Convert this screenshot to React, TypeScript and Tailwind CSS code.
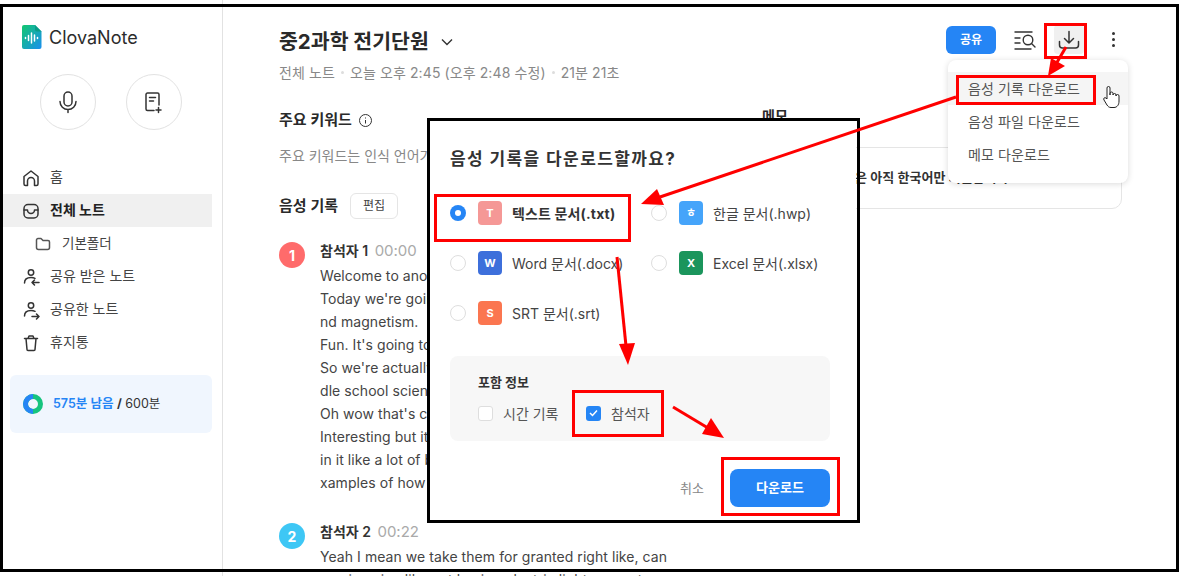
import React from "react";

const FONT = "font-['Inter','Noto_Sans_CJK_KR',sans-serif]";

function Logo() {
  return (
    <svg width="20" height="24" viewBox="0 0 20 24" className="shrink-0">
      <defs>
        <linearGradient id="lg" x1="0" y1="0" x2="1" y2="1">
          <stop offset="0" stopColor="#12c76f" />
          <stop offset="1" stopColor="#1a8ff0" />
        </linearGradient>
      </defs>
      <path d="M2 0h11l6.500 6.500V22a2 2 0 0 1-2 2H2a2 2 0 0 1-2-2V2a2 2 0 0 1 2-2z" fill="url(#lg)" />
      <path d="M13 0l6.500 6.500H15a2 2 0 0 1-2-2z" fill="#0b9d86" />
      <path d="M3.500 12.500v1M6.500 10.500v5M9.500 8v10M12.500 10v6M15.500 12.500v1" stroke="#fff" strokeWidth="1.500" strokeLinecap="round" />
    </svg>
  );
}

function I({ children, w = 20, h = 20 }: { children: React.ReactNode; w?: number; h?: number }) {
  return (
    <svg width={w} height={h} viewBox={`0 0 ${w} ${h}`} fill="none" stroke="#333" strokeWidth="1.5" strokeLinecap="round" strokeLinejoin="round" className="shrink-0">
      {children}
    </svg>
  );
}

function NavItem({ icon, label, active, indent }: { icon: React.ReactNode; label: string; active?: boolean; indent?: boolean }) {
  return (
    <div className={`h-[33px] flex items-center ${indent ? "pl-[32px] gap-[11px] text-[13.500px]" : "pl-[18px] gap-[9px] text-[14px]"} ${active ? "bg-[#f0f0f0] font-bold text-[#222]" : "text-[#444]"}`}>
      {icon}
      <span className={indent ? "" : "pb-[2px]"}>{label}</span>
    </div>
  );
}

function Sidebar() {
  return (
    <aside className="w-[223px] shrink-0 h-[576px] border-r border-[#e2e2e2] flex flex-col pr-[10px] pl-[3px]">
      <div className="flex items-center gap-[7px] pt-[25px] pl-[19px] h-[49px]">
        <Logo />
        <span className="mt-[1px] text-[18px] text-[#2c2c2c] leading-none">ClovaNote</span>
      </div>
      <div className="flex gap-[30px] pl-[37px] mt-[25px]">
        <div className="w-[56px] h-[56px] rounded-full border border-[#e2e2e2] flex items-center justify-center">
          <I w={22} h={24}>
            <rect x="7" y="2" width="8" height="14" rx="4" />
            <path d="M3 11.500a8 8 0 0 0 16 0M11 19.500v3" />
          </I>
        </div>
        <div className="w-[56px] h-[56px] rounded-full border border-[#e2e2e2] flex items-center justify-center">
          <I w={22} h={24}>
            <path d="M11 20.500H4.500a1.500 1.500 0 0 1-1.500-1.500V4.500A1.500 1.500 0 0 1 4.500 3h10A1.500 1.500 0 0 1 16 4.500V15" />
            <path d="M6.500 7.500h6M6.500 11h4M15.500 17.500v5M13 20h5" />
          </I>
        </div>
      </div>
      <nav className="mt-[31px]">
        <NavItem label="홈" icon={<I w={20} h={20}><path d="M3 8.500L10 3l7 5.500V16a1.500 1.500 0 0 1-1.500 1.500h-2V13a3.500 3.500 0 0 0-7 0v4.500h-2A1.500 1.500 0 0 1 3 16z" /></I>} />
        <NavItem active label="전체 노트" icon={<I w={20} h={20}><rect x="3" y="3.500" width="14" height="13.500" rx="4" /><path d="M3 9h3.500a3.500 3.500 0 0 0 7 0H17" /></I>} />
        <NavItem indent label="기본폴더" icon={<I w={16} h={16}><path d="M1.500 4a1.500 1.500 0 0 1 1.500-1.500h3l2 2h5a1.500 1.500 0 0 1 1.500 1.500v5.500a2 2 0 0 1-2 2h-9a2 2 0 0 1-2-2z" stroke="#555" /></I>} />
        <NavItem label="공유 받은 노트" icon={<I w={20} h={20}><circle cx="10" cy="5.500" r="2.700" /><path d="M3.500 16c0-3.500 2-5.500 6.500-5.500 1.500 0 3 .3 4 .8M18 15.500h-7M13.500 13l-2.500 2.500 2.500 2.500" /></I>} />
        <NavItem label="공유한 노트" icon={<I w={20} h={20}><circle cx="10" cy="5.500" r="2.700" /><path d="M3.500 16c0-3.500 2-5.500 6.500-5.500 1.500 0 3 .3 4 .8M11 16.500h7M15.500 14l2.500 2.500-2.500 2.500" /></I>} />
        <NavItem label="휴지통" icon={<I w={20} h={20}><path d="M3.500 5.500h13M7 5.500L8 3h4l1 2.500M5 5.500l1 11a1 1 0 0 0 1 1h6a1 1 0 0 0 1-1l1-11" /></I>} />
      </nav>
      <div className="mt-[16px] ml-[7px] h-[58px] rounded-[6px] bg-[#f0f6fe] flex items-center pl-[13px] gap-[10px] text-[12.500px]">
        <svg width="20" height="20" viewBox="0 0 20 20" fill="none" className="shrink-0">
          <circle cx="10" cy="10" r="7.500" stroke="#15c47e" strokeWidth="5" />
          <path d="M10 2.500A7.500 7.500 0 0 0 10 17.500" stroke="#2585f5" strokeWidth="5" />
        </svg>
        <span>
          <span className="text-[#2585f5] font-semibold">575분 남음</span>
          <span className="text-[#333]"> <b>/</b> 600분</span>
        </span>
      </div>
    </aside>
  );
}

function Speaker({ n, color, time, lines, className }: { n: number; color: string; time: string; lines: string[]; className?: string }) {
  return (
    <div className={`flex ${className ?? ""}`}>
      <div className={`w-[26px] h-[26px] rounded-full ${color} text-white text-[14px] font-bold flex items-center justify-center shrink-0 mt-[1px]`}>{n}</div>
      <div className="ml-[15px]">
        <div className="text-[14px] h-[20px] leading-[20px] font-semibold text-[#333] whitespace-nowrap">
          참석자 {n} <span className="ml-[3px] text-[15px] font-normal text-[#aaa]">{time}</span>
        </div>
        <div className="mt-[3px] text-[14px] leading-[23px] tracking-[0.06px] text-[#444] whitespace-nowrap">
          {lines.map((l) => (
            <div key={l}>{l}</div>
          ))}
        </div>
      </div>
    </div>
  );
}

function Main() {
  return (
    <main className="flex-1 pl-[56px] pr-[59px] relative">
      <div className="flex items-start justify-between pt-[25px]">
        <div className="mt-[2px]">
          <div className="flex items-center h-[30px] gap-[11px]">
            <h1 className="text-[20.500px] font-bold text-[#2a2a2a] leading-none">중2과학 전기단원</h1>
            <svg width="14" height="14" viewBox="0 0 14 14" fill="none" stroke="#333" strokeWidth="1.400"><path d="M2 4.500l5 5 5-5" /></svg>
          </div>
          <div className="mt-[5px] text-[14px] tracking-[0.1px] text-[#888] flex items-center gap-[6px] h-[20px]">
            전체 노트 <i className="w-[3px] h-[3px] rounded-full bg-[#ddd]" /> 오늘 오후 2:45 (오후 2:48 수정) <i className="w-[3px] h-[3px] rounded-full bg-[#ddd]" /> 21분 21초
          </div>
        </div>
        <div className="flex items-center -mr-[6px]">
          <button className="w-[50px] h-[28px] rounded-[6px] bg-[#2585f5] text-white text-[12px] font-bold">공유</button>
          <div className="w-[30px] h-[29px] ml-[14px] flex items-center justify-center">
            <svg width="24" height="22" viewBox="0 0 24 22" fill="none" stroke="#333" strokeWidth="1.400" strokeLinecap="round">
              <path d="M2 3h17M2 9h5M2 14h5M2 20h16" />
              <circle cx="15" cy="11" r="4.800" />
              <path d="M18.500 14.500L22 18" />
            </svg>
          </div>
          <div className="w-[30px] h-[29px] ml-[14px] rounded-[4px] bg-[#f0f0f0] flex items-center justify-center">
            <svg width="22" height="20" viewBox="0 0 22 20" fill="none" stroke="#333" strokeWidth="1.500" strokeLinecap="round" strokeLinejoin="round">
              <path d="M11 1.500v11M6.500 8.500l4.500 4.500 4.500-4.500M1.500 11.500v3.500a3 3 0 0 0 3 3h13a3 3 0 0 0 3-3v-3.500" />
            </svg>
          </div>
          <div className="w-[30px] h-[29px] ml-[14px] flex flex-col items-center justify-center gap-[3px]">
            <i className="w-[3px] h-[3px] rounded-full bg-[#333]" />
            <i className="w-[3px] h-[3px] rounded-full bg-[#333]" />
            <i className="w-[3px] h-[3px] rounded-full bg-[#333]" />
          </div>
        </div>
      </div>

      <div className="flex mt-[28px]">
        <div className="w-[483px] shrink-0">
          <div className="flex items-center gap-[6px] h-[20px] text-[15px] font-semibold text-[#2a2a2a]">
            주요 키워드
            <svg width="15" height="15" viewBox="0 0 15 15" fill="none" stroke="#333" strokeWidth="1"><circle cx="7.500" cy="7.500" r="6" /><path d="M7.500 7v3.500M7.500 4.500v1" /></svg>
          </div>
          <div className="mt-[16px] h-[20px] leading-[20px] text-[14px] text-[#888] whitespace-nowrap">주요 키워드는 인식 언어가 한국어인 경우에만 제공됩니다.</div>
          <div className="flex items-center mt-[27px] h-[26px]">
            <span className="text-[15px] font-semibold text-[#2a2a2a]">음성 기록</span>
            <span className="ml-[12px] w-[48px] h-[26px] rounded-[6px] border border-[#e5e5e5] text-[12px] text-[#444] flex items-center justify-center">편집</span>
          </div>
          <Speaker
            className="mt-[22px]"
            n={1}
            color="bg-[#ff6b6b]"
            time="00:00"
            lines={[
              "Welcome to another deep dive everybody.",
              "Today we're going to be talking about electricity a",
              "nd magnetism.",
              "Fun. It's going to be a great one.",
              "So we're actually looking at a mid",
              "dle school science textbook.",
              "Oh wow that's cool.",
              "Interesting but it's got some good stuff",
              "in it like a lot of basic concepts and good e",
              "xamples of how these things work.",
            ]}
          />
          <Speaker
            className="mt-[28px]"
            n={2}
            color="bg-[#3ec7f5]"
            time="00:22"
            lines={["Yeah I mean we take them for granted right like, can", "you imagine like not having electric light or a note"]}
          />
        </div>
        <div className="flex-1 -mt-[5px]">
          <div className="h-[20px] text-[14px] font-semibold text-[#2a2a2a]">메모</div>
          <div className="mt-[22px] h-[62px] rounded-[10px] border border-[#e5e5e5] flex items-center pl-[41px] text-[13px] font-semibold text-[#333] whitespace-nowrap">
            메모 기능은 아직 한국어만 지원합니다.
          </div>
        </div>
      </div>

      <div className="absolute left-[725px] top-[60px] w-[180px] h-[123px] rounded-[8px] bg-white shadow-[0_1px_6px_rgba(0,0,0,0.15)] pt-[12px] text-[14px] text-[#555]">
        {["음성 기록 다운로드", "음성 파일 다운로드", "메모 다운로드"].map((t, i) => (
          <div key={t} className={`h-[33px] flex items-center pl-[20px] tracking-[0.1px] ${i === 0 ? "bg-[#f5f5f5]" : ""}`}>{t}</div>
        ))}
      </div>
    </main>
  );
}

function FileIcon({ bg, c }: { bg: string; c: string }) {
  return <span className={`w-[24px] h-[24px] rounded-[4px] ${bg} text-white text-[11px] font-bold flex items-center justify-center shrink-0`}>{c}</span>;
}

function Option({ bg, c, label, checked }: { bg: string; c: string; label: string; checked?: boolean }) {
  return (
    <div className={`h-[24px] flex items-center text-[14px] whitespace-nowrap ${checked ? "font-bold tracking-[0.15px] text-[#333]" : "text-[#444]"}`}>
      {checked ? (
        <span className="w-[16px] h-[16px] rounded-full bg-[#2585f5] flex items-center justify-center shrink-0"><i className="w-[6px] h-[6px] rounded-full bg-white" /></span>
      ) : (
        <span className="w-[16px] h-[16px] rounded-full border border-[#dedede] shrink-0" />
      )}
      <span className="ml-[12px]"><FileIcon bg={bg} c={c} /></span>
      <span className="ml-[10px]">{label}</span>
    </div>
  );
}

function Modal() {
  return (
    <div className="absolute left-[430px] top-[121px] w-[426px] h-[398px] rounded-[10px] bg-white px-[20px] pt-[27px]">
      <h2 className="text-[17px] font-bold text-[#333] leading-[22px] tracking-[1.400px]">음성 기록을 다운로드할까요?</h2>
      <div className="grid grid-cols-[201px_1fr] gap-y-[26px] mt-[31px]">
        <Option checked bg="bg-[#f59896]" c="T" label="텍스트 문서(.txt)" />
        <Option bg="bg-[#45a4fa]" c="ㅎ" label="한글 문서(.hwp)" />
        <Option bg="bg-[#3d6fdb]" c="W" label="Word 문서(.docx)" />
        <Option bg="bg-[#1b955c]" c="X" label="Excel 문서(.xlsx)" />
        <Option bg="bg-[#fb7650]" c="S" label="SRT 문서(.srt)" />
      </div>
      <div className="mt-[31px] h-[85px] w-[380px] rounded-[8px] bg-[#f7f7f7] pl-[28px] pt-[17px]">
        <div className="text-[13px] font-bold text-[#333] leading-[18px]">포함 정보</div>
        <div className="flex items-center mt-[10px] h-[24px] text-[14px] text-[#555]">
          <span className="w-[15px] h-[15px] rounded-[3px] border border-[#dedede] bg-white" />
          <span className="ml-[10px] w-[83px]">시간 기록</span>
          <span className="w-[15px] h-[15px] rounded-[3px] bg-[#2585f5] flex items-center justify-center">
            <svg width="9" height="8" viewBox="0 0 9 8" fill="none" stroke="#fff" strokeWidth="1.500"><path d="M1 4l2.500 2.500L8 1.500" /></svg>
          </span>
          <span className="ml-[10px]">참석자</span>
        </div>
      </div>
      <div className="flex items-center justify-end mt-[28px] w-[380px]">
        <span className="mt-[1px] text-[13px] text-[#888]">취소</span>
        <button className="ml-[26px] w-[100px] h-[38px] rounded-[8px] bg-[#2585f5] text-white text-[13px] font-bold">다운로드</button>
      </div>
    </div>
  );
}

function Box({ c }: { c: string }) {
  return <div className={`absolute border-[3px] border-[#ff0000] ${c}`} />;
}

function Overlay() {
  return (
    <>
      <div className="absolute left-[427px] top-[118px] w-[433px] h-[405px] border-[3px] border-black pointer-events-none" />
      <div className="absolute left-0 top-[4px] w-[1179px] h-[568px] border-[3px] border-black pointer-events-none" />
      <Box c="left-[956px] top-[75px] w-[140px] h-[30px]" />
      <Box c="left-[1044px] top-[23px] w-[43px] h-[36px]" />
      <Box c="left-[434px] top-[194px] w-[197px] h-[48px]" />
      <Box c="left-[572px] top-[390px] w-[92px] h-[47px]" />
      <Box c="left-[721px] top-[457px] w-[119px] h-[59px]" />
      <svg className="absolute left-0 top-0 pointer-events-none" width="1181" height="576" fill="#ff0000" stroke="none">
        <line x1="1066" y1="47" x2="1056" y2="64" stroke="#ff0000" strokeWidth="3" />
        <polygon points="1048,76 1051,58 1065,66" />
        <line x1="956" y1="97" x2="660" y2="197" stroke="#ff0000" strokeWidth="3" />
        <polygon points="641,204 657,189 664,205" />
        <line x1="617" y1="257" x2="626" y2="346" stroke="#ff0000" strokeWidth="3" />
        <polygon points="628,365 619,344 635,343" />
        <line x1="673" y1="407" x2="708" y2="428" stroke="#ff0000" strokeWidth="3" />
        <polygon points="724,438 702,434 711,418" />
      </svg>
      <svg className="absolute left-[1102px] top-[85px] pointer-events-none" width="20" height="24" viewBox="0 0 20 24" fill="#fff" stroke="#222" strokeWidth="1" strokeLinejoin="round">
        <path d="M5 14V3a1.500 1.500 0 0 1 3 0v7V8.500a1.500 1.500 0 0 1 3 0V10a1.500 1.500 0 0 1 3 0v1a1.500 1.500 0 0 1 3 0v5c0 4-2 6.500-5 6.500H9c-2 0-3-1-4-2.500L2 15c-1-1.500.5-3 2-2z" />
      </svg>
    </>
  );
}

export default function App() {
  return (
    <div className={`relative w-[1181px] h-[576px] overflow-hidden bg-white flex ${FONT}`}>
      <Sidebar />
      <Main />
      <Modal />
      <Overlay />
    </div>
  );
}
